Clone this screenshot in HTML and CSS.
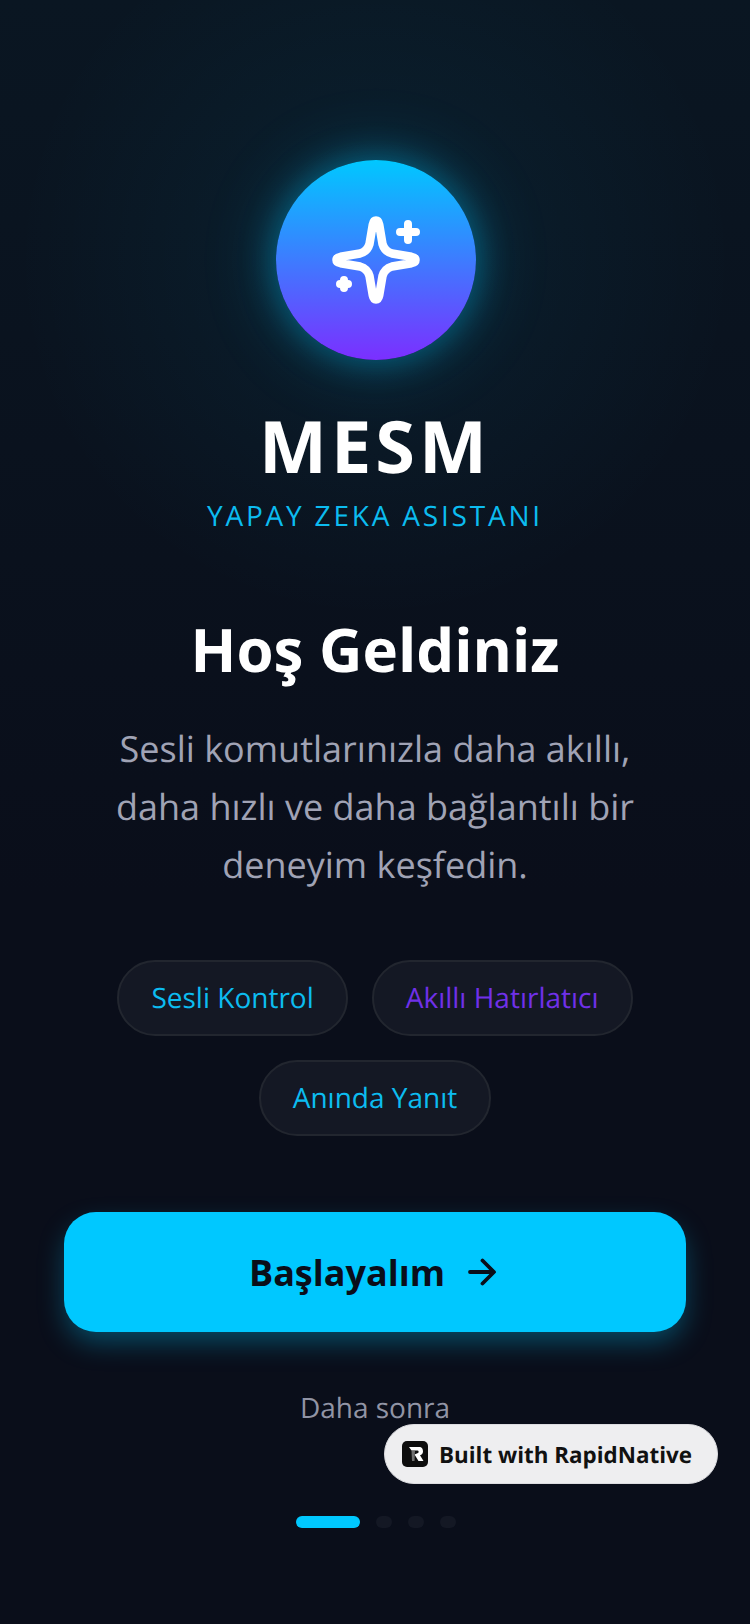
FILE: index.html
```html
<!DOCTYPE html>
<html lang="tr">
<head>
<meta charset="utf-8">
<title>MESM</title>
<link rel="stylesheet" href="styles.css">
</head>
<body>
<main class="screen">
  <div class="logo">
    <svg class="logo-icon" viewBox="0 0 96 96" fill="none" stroke="#fff" stroke-width="8.500" stroke-linecap="round" stroke-linejoin="round">
      <path d="M48 8.500 C49.800 8.500 50.800 10.500 51.200 12.500 L54.500 32 C55.800 36.500 59.500 40.200 64 41.500 L83.500 44.800 C85.500 45.200 87.500 46.200 87.500 48 C87.500 49.800 85.500 50.800 83.500 51.200 L64 54.500 C59.500 55.800 55.800 59.500 54.500 64 L51.200 83.500 C50.800 85.500 49.800 87.500 48 87.500 C46.200 87.500 45.200 85.500 44.800 83.500 L41.500 64 C40.200 59.500 36.500 55.800 32 54.500 L12.500 51.200 C10.500 50.800 8.500 49.800 8.500 48 C8.500 46.200 10.500 45.200 12.500 44.800 L32 41.500 C36.500 40.200 40.200 36.500 41.500 32 L44.800 12.500 C45.200 10.500 46.200 8.500 48 8.500 Z"/>
      <path d="M80 12 V28 M72 20 H88" stroke-width="8"/>
      <path d="M16 68 V76 M12 72 H20" stroke-width="8"/>
    </svg>
  </div>
  <h1 class="brand">MESM</h1>
  <p class="tagline">YAPAY ZEKA ASISTANI</p>
  <h2 class="title">Hoş Geldiniz</h2>
  <p class="desc">Sesli komutlarınızla daha akıllı,<br>daha hızlı ve daha bağlantılı bir<br>deneyim keşfedin.</p>
  <div class="chips">
    <span class="chip">Sesli Kontrol</span>
    <span class="chip chip-violet">Akıllı Hatırlatıcı</span>
    <span class="chip">Anında Yanıt</span>
  </div>
  <button class="cta">
    <span>Başlayalım</span>
    <svg class="cta-arrow" viewBox="0 0 32 32" fill="none" stroke="#0a0e1a" stroke-width="3.800" stroke-linecap="round" stroke-linejoin="round"><path d="M4 16 H27 M16.500 4.500 L28 16 L16.500 27.500"/></svg>
  </button>
  <p class="later">Daha sonra</p>
  <div class="dots">
    <span class="dot dot-active"></span>
    <span class="dot"></span>
    <span class="dot"></span>
    <span class="dot"></span>
  </div>
</main>
<div class="badge">
  <svg class="badge-logo" viewBox="0 0 26 26"><rect width="26" height="26" rx="5" fill="#0d0d0d"/><path d="M7 6 H17 C20 6 21 8 21 10.500 C21 12.500 19.800 13.800 18 14.300 L21.500 20 H16.500 L12.500 13.500 L16 12 C17 11.500 16.800 9.500 15.500 9.500 H9.500 Z" fill="#fff"/><path d="M9.500 10 H13 L12.500 20 H10 Z" fill="#6e6e6e"/></svg>
  <span>Built with RapidNative</span>
</div>
</body>
</html>
```
FILE: styles.css
```css
* { box-sizing: border-box; }
html, body { margin: 0; padding: 0; }
body {
  width: 750px;
  height: 1624px;
  position: relative;
  overflow: hidden;
  font-family: "Open Sans", sans-serif;
  text-rendering: geometricPrecision;
  background: #0a0e1a;
}
.screen {
  height: 1624px;
  display: flex;
  flex-direction: column;
  align-items: center;
  padding-top: 160px;
  background:
    radial-gradient(circle 360px at 375px 260px, rgba(0, 200, 255, 0.07), rgba(0, 200, 255, 0) 100%),
    linear-gradient(180deg, #0a1622 0%, #0a0e1a 55%, #0a0e1a 100%);
}
.logo {
  width: 200px;
  height: 200px;
  margin-left: 2px;
  border-radius: 50%;
  flex: none;
  display: flex;
  align-items: center;
  justify-content: center;
  background: linear-gradient(180deg, #00c8ff 0%, #7b2fff 100%);
  box-shadow: 0 0 36px rgba(0, 200, 255, 0.4), 0 0 80px rgba(0, 200, 255, 0.2);
}
.logo-icon { width: 96px; height: 96px; display: block; }
.brand {
  margin: 42px 0 0;
  font-size: 72px;
  line-height: 88px;
  font-weight: 700;
  letter-spacing: 4px;
  color: #fff;
}
.tagline {
  margin: 8px 0 0;
  font-size: 28px;
  line-height: 36px;
  letter-spacing: 2.800px;
  color: #0cbcf0;
}
.title {
  margin: 77px 0 0;
  font-size: 60px;
  line-height: 76px;
  font-weight: 700;
  color: #fff;
}
.desc {
  margin: 33px 0 0;
  font-size: 36px;
  line-height: 58px;
  text-align: center;
  color: #a0a3b5;
}
.chips {
  margin-top: 66px;
  width: 622px;
  display: flex;
  flex-wrap: wrap;
  justify-content: center;
  gap: 24px;
}
.chip {
  height: 76px;
  padding: 0 32px;
  display: flex;
  align-items: center;
  border-radius: 38px;
  border: 2px solid #22262f;
  background: #141824;
  font-size: 28px;
  color: #0cbcf0;
}
.chip-violet { color: #7030e8; }
.cta {
  margin-top: 76px;
  width: 622px;
  height: 120px;
  flex: none;
  border: 0;
  border-radius: 32px;
  background: #00c8ff;
  box-shadow: 0 12px 28px -3px rgba(0, 200, 255, 0.35);
  display: flex;
  align-items: center;
  justify-content: center;
  gap: 21px;
  font-family: inherit;
  font-size: 36px;
  font-weight: 700;
  color: #0a0e1a;
}
.cta-arrow { width: 32px; height: 32px; display: block; margin-right: 3px; }
.later {
  margin: 48px 0 0;
  font-size: 28px;
  line-height: 56px;
  color: #a0a3b5;
  opacity: 0.9;
}
.dots {
  margin-top: 80px;
  margin-left: 2px;
  display: flex;
  gap: 16px;
}
.dot {
  width: 16px;
  height: 12px;
  border-radius: 6px;
  background: #141824;
}
.dot-active { width: 64px; background: #00c8ff; }
.badge {
  position: absolute;
  left: 384px;
  top: 1424px;
  width: 334px;
  height: 60px;
  border-radius: 30px;
  background: #eeeef0;
  border: 1px solid #dcdce0;
  display: flex;
  align-items: center;
  gap: 11px;
  padding-left: 17px;
  font-size: 22.400px;
  font-weight: 700;
  color: #111;
}
.badge-logo { width: 26px; height: 26px; display: block; }
```
